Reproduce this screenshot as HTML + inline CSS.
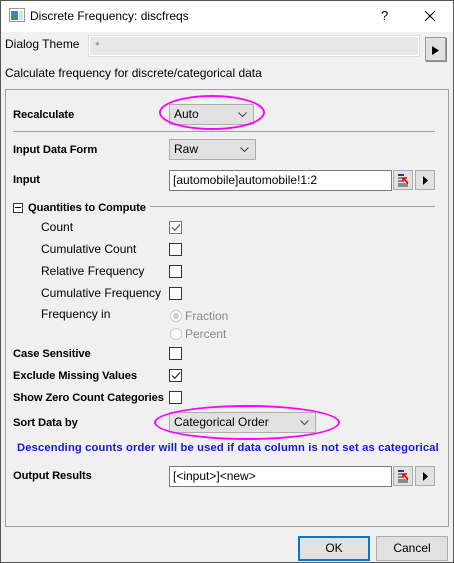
<!DOCTYPE html>
<html><head><style>
*{margin:0;padding:0;box-sizing:border-box}
body{width:454px;height:563px;background:#f0f0f0;font-family:"Liberation Sans",sans-serif;font-size:12px;color:#000;position:relative;overflow:hidden}
.a{position:absolute;white-space:nowrap}
.b{font-weight:bold;font-size:11.2px;letter-spacing:-0.1px}
.lbl{position:absolute;line-height:14px;white-space:nowrap}
.cb{position:absolute;width:13px;height:13px;border:1px solid #333;background:#fff}
.combo{position:absolute;background:#e1e1e1;border:1px solid #adadad;padding-left:4px;line-height:19px}
.combo svg{position:absolute;right:6px;top:7px}
.field{position:absolute;background:#fff;border:1px solid #7a7a7a;box-shadow:inset 0 0 0 1px #fff;padding-left:3px;line-height:19px}
.btn{position:absolute;background:#e1e1e1;border:1px solid #adadad}
.ell{position:absolute;border:2px solid #f0f;border-radius:50%}
</style></head><body>
<div class="a" style="left:0;top:0;width:454px;height:32px;background:#fff"></div>
<div class="a" style="left:0;top:0;width:1px;height:563px;background:#555"></div>
<div class="a" style="left:453px;top:0;width:1px;height:563px;background:#555"></div>
<div class="a" style="left:0;top:562px;width:454px;height:1px;background:#555"></div>
<div class="a" style="left:0;top:0;width:454px;height:1px;background:#555"></div>
<svg class="a" style="left:9px;top:8px" width="16" height="14"><rect x="0.5" y="0.5" width="15" height="13" fill="#fff" stroke="#999"/><rect x="2" y="3" width="7" height="9" fill="#3a8a8a"/><rect x="2" y="3" width="7" height="4" fill="#4a7fc0"/><rect x="10" y="3" width="4" height="9" fill="#cfe3e0"/></svg>
<div class="a" style="left:30px;top:9px;font-size:12px">Discrete Frequency: discfreqs</div>
<div class="a" style="left:381px;top:8px;font-size:13px">?</div>
<svg class="a" style="left:424px;top:10px" width="12" height="12"><path d="M1 1L11 11M11 1L1 11" stroke="#000" stroke-width="1.1"/></svg>

<div class="a" style="left:5px;top:37px">Dialog Theme</div>
<div class="a" style="left:89px;top:36px;width:330px;height:20px;background:#e8e8e8;border:1px solid #fff;outline:1px solid #ddd;color:#888;padding-left:5px;line-height:18px">*</div>
<div class="btn" style="left:425px;top:37px;width:21px;height:24px;border-color:#999;box-shadow:1px 1px 0 #888"><svg style="position:absolute;left:6px;top:8px" width="8" height="9"><path d="M0 0L7 4.5L0 9Z"/></svg></div>
<div class="a" style="left:5px;top:66px">Calculate frequency for discrete/categorical data</div>

<div class="a" style="left:5px;top:89px;width:444px;height:438px;border:1px solid #a0a0a0"></div>

<div class="lbl b" style="left:13px;top:108px">Recalculate</div>
<div class="combo" style="left:169px;top:104px;width:85px;height:21px">Auto<svg width="9" height="6"><path d="M0.5 0.5L4.5 4.5L8.5 0.5" fill="none" stroke="#444"/></svg></div>
<div class="ell" style="left:159px;top:95px;width:106px;height:35px"></div>
<div class="a" style="left:13px;top:131px;width:422px;height:1px;background:#a0a0a0"></div>

<div class="lbl b" style="left:13px;top:143px">Input Data Form</div>
<div class="combo" style="left:169px;top:139px;width:87px;height:21px">Raw<svg width="9" height="6"><path d="M0.5 0.5L4.5 4.5L8.5 0.5" fill="none" stroke="#444"/></svg></div>

<div class="lbl b" style="left:13px;top:173px">Input</div>
<div class="field" style="left:169px;top:170px;width:223px;height:21px">[automobile]automobile!1:2</div>
<div class="btn" style="left:393px;top:170px;width:20px;height:20px"><svg style="position:absolute;left:2px;top:2px" width="15" height="15"><rect x="2" y="1" width="6" height="2" fill="#1a3a9a"/><path d="M2 5h9M2 8h4M2 11h10M2 13h10" stroke="#333"/><path d="M7 5L12 10M7 5v4M7 5h4" stroke="#e00" stroke-width="1.6" fill="none"/></svg></div>
<div class="btn" style="left:415px;top:170px;width:20px;height:20px"><svg style="position:absolute;left:7px;top:5px" width="6" height="9"><path d="M0 0L5 4.5L0 9Z"/></svg></div>

<div class="a" style="left:13px;top:203px;width:10px;height:10px;border:1px solid #333;background:#fff"><div style="position:absolute;left:1px;top:3px;width:6px;height:1px;background:#000"></div></div>
<div class="lbl b" style="left:28px;top:201px">Quantities to Compute</div>
<div class="a" style="left:150px;top:206px;width:285px;height:1px;background:#a0a0a0"></div>

<div class="lbl" style="left:41px;top:220px">Count</div>
<div class="cb" style="left:169px;top:221px;border-color:#777"><svg style="position:absolute;left:1px;top:1px" width="10" height="9"><path d="M1 4.5L3.8 7.3L9 1.5" fill="none" stroke="#555" stroke-width="1.2"/></svg></div>
<div class="lbl" style="left:41px;top:242px">Cumulative Count</div>
<div class="cb" style="left:169px;top:243px"></div>
<div class="lbl" style="left:41px;top:264px">Relative Frequency</div>
<div class="cb" style="left:169px;top:265px"></div>
<div class="lbl" style="left:41px;top:286px">Cumulative Frequency</div>
<div class="cb" style="left:169px;top:287px"></div>
<div class="lbl" style="left:41px;top:307px">Frequency in</div>
<div class="a" style="left:170px;top:310px;width:12px;height:12px;border-radius:50%;border:1px solid #ccc;background:#fff"><div style="position:absolute;left:2px;top:2px;width:6px;height:6px;border-radius:50%;background:#ccc"></div></div>
<div class="lbl" style="left:185px;top:309px;color:#888">Fraction</div>
<div class="a" style="left:170px;top:328px;width:12px;height:12px;border-radius:50%;border:1px solid #ccc;background:#fff"></div>
<div class="lbl" style="left:185px;top:327px;color:#888">Percent</div>

<div class="lbl b" style="left:13px;top:347px">Case Sensitive</div>
<div class="cb" style="left:169px;top:347px"></div>
<div class="lbl b" style="left:13px;top:369px">Exclude Missing Values</div>
<div class="cb" style="left:169px;top:369px"><svg style="position:absolute;left:1px;top:1px" width="10" height="9"><path d="M1 4.5L3.8 7.3L9 1.5" fill="none" stroke="#222" stroke-width="1.2"/></svg></div>
<div class="lbl b" style="left:13px;top:391px">Show Zero Count Categories</div>
<div class="cb" style="left:169px;top:391px"></div>

<div class="lbl b" style="left:13px;top:416px">Sort Data by</div>
<div class="combo" style="left:169px;top:412px;width:147px;height:21px">Categorical Order<svg width="9" height="6"><path d="M0.5 0.5L4.5 4.5L8.5 0.5" fill="none" stroke="#444"/></svg></div>
<div class="ell" style="left:154px;top:405px;width:186px;height:35px"></div>
<div class="lbl b" style="left:17px;top:441px;color:#1414f0;letter-spacing:0.15px">Descending counts order will be used if data column is not set as categorical</div>

<div class="lbl b" style="left:13px;top:469px">Output Results</div>
<div class="field" style="left:169px;top:466px;width:223px;height:21px">[&lt;input&gt;]&lt;new&gt;</div>
<div class="btn" style="left:393px;top:466px;width:20px;height:20px"><svg style="position:absolute;left:2px;top:2px" width="15" height="15"><rect x="2" y="1" width="6" height="2" fill="#1a3a9a"/><path d="M2 5h9M2 8h4M2 11h10M2 13h10" stroke="#333"/><path d="M7 5L12 10M7 5v4M7 5h4" stroke="#e00" stroke-width="1.6" fill="none"/></svg></div>
<div class="btn" style="left:415px;top:466px;width:20px;height:20px"><svg style="position:absolute;left:7px;top:5px" width="6" height="9"><path d="M0 0L5 4.5L0 9Z"/></svg></div>

<div class="btn" style="left:298px;top:536px;width:72px;height:25px;border:2px solid #0078d7;text-align:center;line-height:21px">OK</div>
<div class="btn" style="left:376px;top:536px;width:72px;height:25px;text-align:center;line-height:23px">Cancel</div>
</body></html>
